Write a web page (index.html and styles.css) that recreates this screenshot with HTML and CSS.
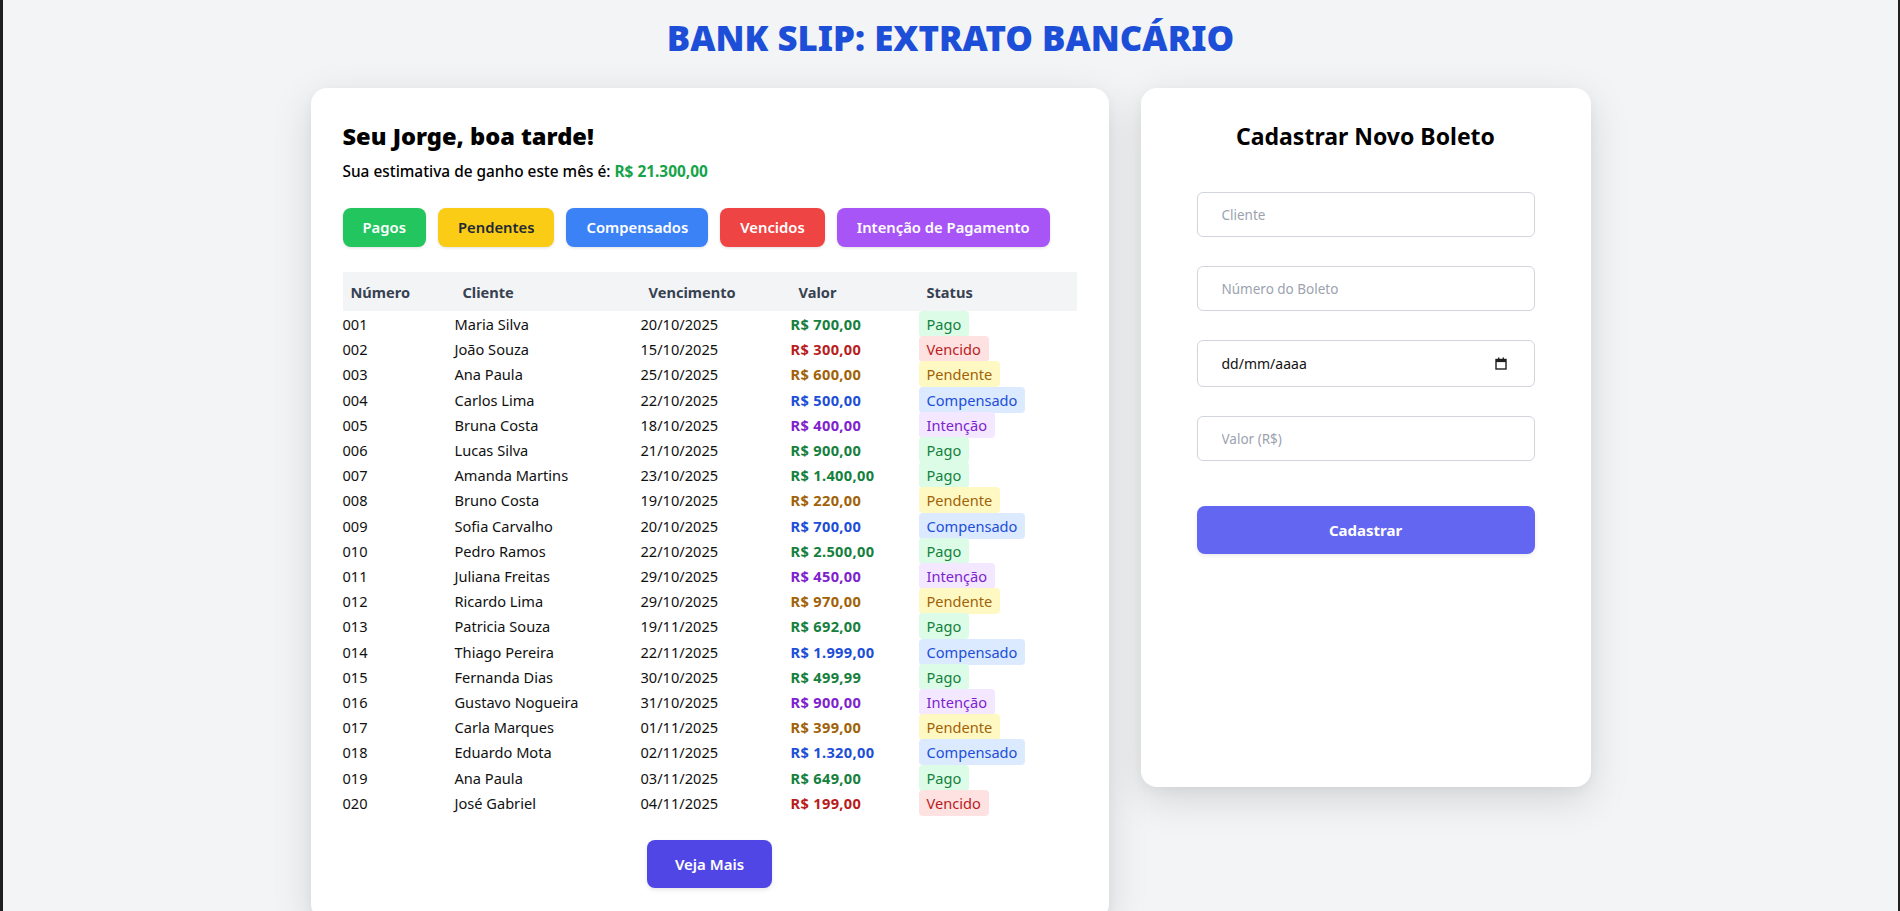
FILE: index.html
```html
<!DOCTYPE html>
<html lang="pt-BR">
<head>
<meta charset="utf-8">
<title>Bank Slip: Extrato Bancário</title>
<link rel="stylesheet" href="styles.css">
</head>
<body>
<div class="page">
  <h1 class="title">BANK SLIP: EXTRATO BANCÁRIO</h1>
  <div class="layout">
    <section class="card card-main">
      <h2 class="greeting">Seu Jorge, boa tarde!</h2>
      <p class="estimate">Sua estimativa de ganho este mês é: <span class="estimate-value">R$ 21.300,00</span></p>
      <div class="filters">
        <button class="filter f-green">Pagos</button>
        <button class="filter f-yellow">Pendentes</button>
        <button class="filter f-blue">Compensados</button>
        <button class="filter f-red">Vencidos</button>
        <button class="filter f-purple">Intenção de Pagamento</button>
      </div>
      <table class="slips">
        <colgroup>
          <col class="c1"><col class="c2"><col class="c3"><col class="c4"><col>
        </colgroup>
        <thead>
          <tr><th>Número</th><th>Cliente</th><th>Vencimento</th><th>Valor</th><th>Status</th></tr>
        </thead>
        <tbody>
          <tr><td>001</td><td>Maria Silva</td><td>20/10/2025</td><td class="v green">R$ 700,00</td><td><span class="badge b-green">Pago</span></td></tr>
          <tr><td>002</td><td>João Souza</td><td>15/10/2025</td><td class="v red">R$ 300,00</td><td><span class="badge b-red">Vencido</span></td></tr>
          <tr><td>003</td><td>Ana Paula</td><td>25/10/2025</td><td class="v yellow">R$ 600,00</td><td><span class="badge b-yellow">Pendente</span></td></tr>
          <tr><td>004</td><td>Carlos Lima</td><td>22/10/2025</td><td class="v blue">R$ 500,00</td><td><span class="badge b-blue">Compensado</span></td></tr>
          <tr><td>005</td><td>Bruna Costa</td><td>18/10/2025</td><td class="v purple">R$ 400,00</td><td><span class="badge b-purple">Intenção</span></td></tr>
          <tr><td>006</td><td>Lucas Silva</td><td>21/10/2025</td><td class="v green">R$ 900,00</td><td><span class="badge b-green">Pago</span></td></tr>
          <tr><td>007</td><td>Amanda Martins</td><td>23/10/2025</td><td class="v green">R$ 1.400,00</td><td><span class="badge b-green">Pago</span></td></tr>
          <tr><td>008</td><td>Bruno Costa</td><td>19/10/2025</td><td class="v yellow">R$ 220,00</td><td><span class="badge b-yellow">Pendente</span></td></tr>
          <tr><td>009</td><td>Sofia Carvalho</td><td>20/10/2025</td><td class="v blue">R$ 700,00</td><td><span class="badge b-blue">Compensado</span></td></tr>
          <tr><td>010</td><td>Pedro Ramos</td><td>22/10/2025</td><td class="v green">R$ 2.500,00</td><td><span class="badge b-green">Pago</span></td></tr>
          <tr><td>011</td><td>Juliana Freitas</td><td>29/10/2025</td><td class="v purple">R$ 450,00</td><td><span class="badge b-purple">Intenção</span></td></tr>
          <tr><td>012</td><td>Ricardo Lima</td><td>29/10/2025</td><td class="v yellow">R$ 970,00</td><td><span class="badge b-yellow">Pendente</span></td></tr>
          <tr><td>013</td><td>Patricia Souza</td><td>19/11/2025</td><td class="v green">R$ 692,00</td><td><span class="badge b-green">Pago</span></td></tr>
          <tr><td>014</td><td>Thiago Pereira</td><td>22/11/2025</td><td class="v blue">R$ 1.999,00</td><td><span class="badge b-blue">Compensado</span></td></tr>
          <tr><td>015</td><td>Fernanda Dias</td><td>30/10/2025</td><td class="v green">R$ 499,99</td><td><span class="badge b-green">Pago</span></td></tr>
          <tr><td>016</td><td>Gustavo Nogueira</td><td>31/10/2025</td><td class="v purple">R$ 900,00</td><td><span class="badge b-purple">Intenção</span></td></tr>
          <tr><td>017</td><td>Carla Marques</td><td>01/11/2025</td><td class="v yellow">R$ 399,00</td><td><span class="badge b-yellow">Pendente</span></td></tr>
          <tr><td>018</td><td>Eduardo Mota</td><td>02/11/2025</td><td class="v blue">R$ 1.320,00</td><td><span class="badge b-blue">Compensado</span></td></tr>
          <tr><td>019</td><td>Ana Paula</td><td>03/11/2025</td><td class="v green">R$ 649,00</td><td><span class="badge b-green">Pago</span></td></tr>
          <tr><td>020</td><td>José Gabriel</td><td>04/11/2025</td><td class="v red">R$ 199,00</td><td><span class="badge b-red">Vencido</span></td></tr>
        </tbody>
      </table>
      <div class="more-row"><button class="more">Veja Mais</button></div>
    </section>

    <section class="card card-form">
      <h2 class="form-title">Cadastrar Novo Boleto</h2>
      <form class="form">
        <input class="field" type="text" placeholder="Cliente">
        <input class="field" type="text" placeholder="Número do Boleto">
        <div class="date-wrap">
          <input class="field field-date" type="text" placeholder="dd/mm/aaaa">
          <svg class="cal" width="12" height="13" viewBox="0 0 12 13" aria-hidden="true">
            <rect x="1" y="2.5" width="10" height="9.5" fill="none" stroke="#1f1f1f" stroke-width="1.4"/>
            <rect x="1" y="2.5" width="10" height="2.6" fill="#1f1f1f"/>
            <rect x="3" y="0.5" width="1.4" height="2.5" fill="#1f1f1f"/>
            <rect x="7.6" y="0.5" width="1.4" height="2.5" fill="#1f1f1f"/>
          </svg>
        </div>
        <input class="field" type="text" placeholder="Valor (R$)">
        <button class="submit" type="button">Cadastrar</button>
      </form>
    </section>
  </div>
</div>
</body>
</html>
```

FILE: styles.css
```css
* { box-sizing: border-box; }

html {
  background: #f3f4f6;
  border-left: 3px solid #202020;
  border-right: 2px solid #202020;
}

body {
  margin: 0;
  background: #f3f4f6;
  font-family: "Noto Sans", "Open Sans", sans-serif;
  color: #111;
}

.page {
  padding-top: 18px;
}

.title {
  margin: 0;
  text-align: center;
  font-size: 34.8px;
  line-height: 40px;
  font-weight: 900;
  color: #1d4ed8;
}

.layout {
  width: 1280px;
  margin: 30px auto 0;
  display: flex;
  align-items: flex-start;
  gap: 32px;
}

.card {
  background: #fff;
  border-radius: 16px;
  box-shadow: 0 12px 40px rgba(0, 0, 0, 0.13), 0 4px 12px rgba(0, 0, 0, 0.04);
  padding: 32px;
}

.card-main {
  width: 798px;
}

.card-form {
  width: 450px;
  height: 699px;
}

.greeting {
  margin: 0 0 8px;
  font-size: 23.6px;
  line-height: 32px;
  font-weight: 900;
  color: #000;
}

.estimate {
  margin: 0;
  font-size: 15.4px;
  line-height: 24px;
  font-weight: 500;
  color: #000;
}

.estimate-value {
  color: #16a34a;
  font-weight: 700;
}

.filters {
  display: flex;
  gap: 12px;
  margin-top: 24px;
}

.filter {
  font-family: inherit;
  font-size: 14.8px;
  font-weight: 600;
  line-height: 23px;
  padding: 8px 20px;
  border: none;
  border-radius: 8px;
  color: #fff;
  box-shadow: 0 1px 3px rgba(0, 0, 0, 0.12);
}

.f-green { background: #22c55e; }
.f-yellow { background: #facc15; color: #1f2937; }
.f-blue { background: #3b82f6; }
.f-red { background: #ef4444; }
.f-purple { background: #a855f7; }

.slips {
  width: 100%;
  margin-top: 25px;
  border-collapse: collapse;
  table-layout: fixed;
  font-size: 14.6px;
}

.c1 { width: 112px; }
.c2 { width: 186px; }
.c3 { width: 150px; }
.c4 { width: 128px; }

.slips thead tr {
  background: #f3f4f6;
}

.slips th {
  height: 39px;
  padding: 0 8px;
  text-align: left;
  font-weight: 700;
  color: #374151;
}

.slips td {
  padding: 0;
  height: 25.2px;
  line-height: 25.2px;
  white-space: nowrap;
  color: #111;
}

.slips tbody tr:first-child td {
  padding-top: 1px;
}

.v { font-weight: 700; letter-spacing: 0.35px; }
.green { color: #15803d !important; }
.red { color: #b91c1c !important; }
.yellow { color: #a16207 !important; }
.blue { color: #1d4ed8 !important; }
.purple { color: #7e22ce !important; }

.badge {
  padding: 3px 8px;
  border-radius: 4px;
}

.b-green { background: #dcfce7; color: #15803d; }
.b-red { background: #fee2e2; color: #b91c1c; }
.b-yellow { background: #fef9c3; color: #a16207; }
.b-blue { background: #dbeafe; color: #1d4ed8; }
.b-purple { background: #f3e8ff; color: #7e22ce; }

.more-row {
  display: flex;
  justify-content: center;
  margin-top: 24px;
}

.more {
  font-family: inherit;
  font-size: 15px;
  font-weight: 600;
  line-height: 24px;
  padding: 12px 28px;
  border: none;
  border-radius: 8px;
  background: #4f46e5;
  color: #fff;
  box-shadow: 0 2px 4px rgba(0, 0, 0, 0.1);
}

.form-title {
  margin: 0;
  text-align: center;
  font-size: 23px;
  line-height: 32px;
  font-weight: 700;
  color: #000;
}

.form {
  margin: 40px 24px 0;
  display: flex;
  flex-direction: column;
  gap: 29px;
}

.field {
  display: block;
  width: 100%;
  height: 45px;
  padding: 0 24px;
  border: 1px solid #d1d5db;
  border-radius: 6px;
  font-family: inherit;
  font-size: 13.5px;
  color: #111;
  background: #fff;
  outline: none;
}

.field::placeholder {
  color: #9ca3af;
}

.date-wrap {
  position: relative;
}

.field-date {
  height: 47px;
  font-size: 14px;
}

.field-date::placeholder {
  color: #111;
}

.cal {
  position: absolute;
  right: 28px;
  top: 17px;
}

.submit {
  margin-top: 16px;
  height: 48px;
  border: none;
  border-radius: 8px;
  background: #6366f1;
  color: #fff;
  font-family: inherit;
  font-size: 15px;
  font-weight: 700;
  box-shadow: 0 2px 4px rgba(0, 0, 0, 0.08);
}
```
